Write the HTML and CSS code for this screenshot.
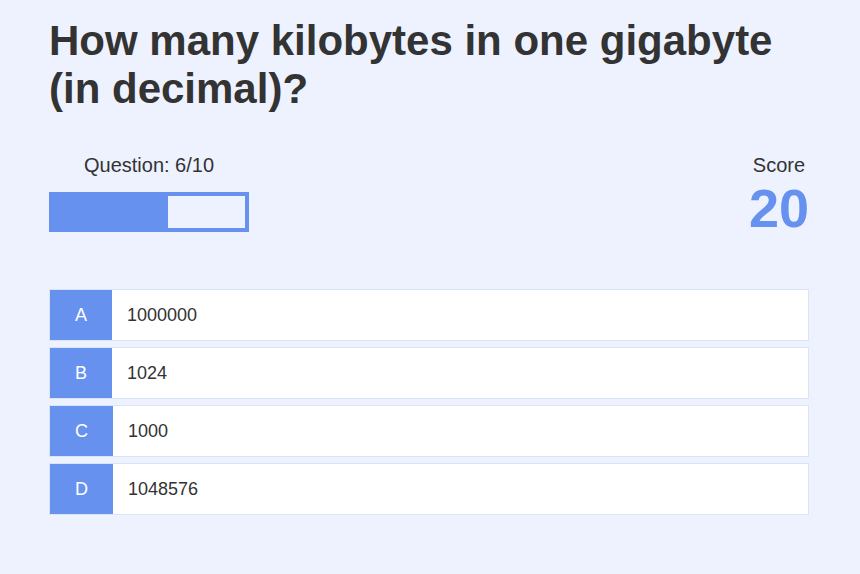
FILE: index.html
```html
<!DOCTYPE html>
<html lang="en">
<head>
<meta charset="utf-8">
<title>Quiz</title>
<link rel="stylesheet" href="styles.css">
</head>
<body>
<main class="quiz">
  <h1 class="question">How many kilobytes in one gigabyte (in decimal)?</h1>
  <div class="hud">
    <div class="progress-block">
      <p class="progress-label">Question: 6/10</p>
      <div class="progress-bar"><div class="progress-fill" style="width: 60%"></div></div>
    </div>
    <div class="score-block">
      <p class="score-label">Score</p>
      <p class="score-value">20</p>
    </div>
  </div>
  <ul class="choices">
    <li class="choice"><span class="choice-letter">A</span><span class="choice-text">1000000</span></li>
    <li class="choice"><span class="choice-letter">B</span><span class="choice-text">1024</span></li>
    <li class="choice"><span class="choice-letter">C</span><span class="choice-text">1000</span></li>
    <li class="choice"><span class="choice-letter">D</span><span class="choice-text">1048576</span></li>
  </ul>
</main>
</body>
</html>
```
FILE: styles.css
```css
* { box-sizing: border-box; }
html, body {
  margin: 0;
  padding: 0;
  background: #edf2fe;
  font-family: "Liberation Sans", Arial, sans-serif;
  color: #333333;
}
.quiz {
  width: 760px;
  margin-left: 49px;
  padding-top: 17px;
}
.question {
  margin: 0;
  font-size: 42px;
  line-height: normal;
  font-weight: 700;
  color: #333333;
}
.hud {
  margin-top: 41px;
  display: flex;
  justify-content: space-between;
  align-items: flex-start;
}
.progress-block {
  width: 200px;
}
.progress-label {
  margin: 0;
  font-size: 20px;
  text-align: center;
}
.progress-bar {
  margin-top: 15px;
  width: 200px;
  height: 40px;
  border: 4px solid #6791ef;
}
.progress-fill {
  height: 100%;
  background: #6791ef;
}
.score-block {
  text-align: center;
}
.score-label {
  margin: 0;
  font-size: 20px;
}
.score-value {
  margin: 0;
  font-size: 54px;
  font-weight: 700;
  color: #6791ef;
}
.choices {
  list-style: none;
  margin: 50px 0 0;
  padding: 0;
  display: flex;
  flex-direction: column;
  gap: 6px;
}
.choice {
  display: flex;
  align-items: stretch;
  height: 52px;
  background: #ffffff;
  border: 1px solid #dae4f7;
  font-size: 18px;
}
.choice-letter {
  display: flex;
  align-items: center;
  padding: 0 25px;
  background: #6791ef;
  color: #ffffff;
}
.choice-text {
  display: flex;
  align-items: center;
  padding-left: 15px;
  color: #333333;
}
```
